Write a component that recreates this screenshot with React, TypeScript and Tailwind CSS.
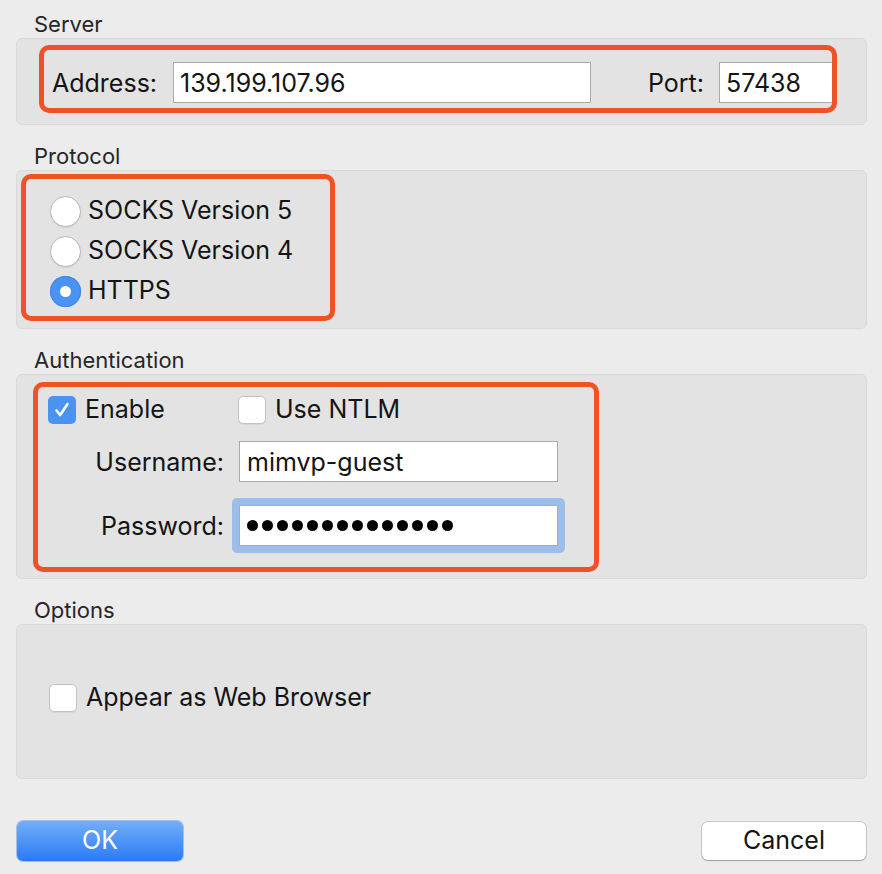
import React from 'react';

const FONT = { fontFamily: 'Inter, "Open Sans", "Liberation Sans", sans-serif' };

const SectionTitle = ({ children }: { children: React.ReactNode }) => (
  <div className="h-[28px] pl-[18px] text-[22px] leading-[28px] text-[#262626]">{children}</div>
);

const Radio = ({ checked }: { checked?: boolean }) =>
  checked ? (
    <div className="w-[31px] h-[31px] rounded-full bg-[#4a93f1] flex items-center justify-center shadow-[inset_0_0_0_1px_#3f86e6]">
      <div className="w-[11px] h-[11px] rounded-full bg-white" />
    </div>
  ) : (
    <div className="w-[31px] h-[31px] rounded-full bg-white border border-[#b9b9b9] shadow-[0_1px_1px_rgba(0,0,0,0.08)]" />
  );

const Checkbox = ({ checked }: { checked?: boolean }) =>
  checked ? (
    <div className="w-[28px] h-[28px] rounded-[5px] bg-[#4a93f1] flex items-center justify-center">
      <svg width="18" height="18" viewBox="0 0 18 18" fill="none">
        <path d="M3.5 9.5 L7.2 14 L14.5 3" stroke="white" strokeWidth="2.6" strokeLinecap="round" strokeLinejoin="round" />
      </svg>
    </div>
  ) : (
    <div className="w-[28px] h-[28px] rounded-[5px] bg-white border border-[#c2c2c2] shadow-[0_1px_1px_rgba(0,0,0,0.06)]" />
  );

export default function App() {
  return (
    <div className="w-[882px] h-[874px] bg-[#ececec] flex flex-col pl-[16px] pr-[15px] pt-[10px] text-[#141414]" style={FONT}>
      {/* Server */}
      <SectionTitle>Server</SectionTitle>
      <div className="h-[87px] bg-[#e3e3e3] border border-[#d9d9d9] rounded-[6px] pt-[6px] pl-[22px]">
        <div className="w-[798px] h-[68px] border-[5px] border-[#ef5226] rounded-[10px] flex items-start pt-[12px]">
          <div className="w-[129px] h-[41px] pl-[8px] pt-[3px] flex items-center text-[25px]">Address:</div>
          <div className="w-[418px] h-[41px] bg-white border border-[#ababab] flex items-center px-[6px] pt-[3px] text-[25px]">139.199.107.96</div>
          <div className="flex-1 h-[41px] flex items-center justify-end pr-[15px] pt-[3px] text-[25px]">Port:</div>
          <div className="w-[113px] h-[41px] bg-white border border-r-0 border-[#ababab] flex items-center px-[6px] pt-[3px] text-[25px]">57438</div>
        </div>
      </div>

      {/* Protocol */}
      <div className="mt-[17px]">
        <SectionTitle>Protocol</SectionTitle>
      </div>
      <div className="h-[159px] bg-[#e3e3e3] border border-[#d9d9d9] rounded-[6px] pt-[3px] pl-[4px]">
        <div className="w-[314px] h-[147px] border-[5px] border-[#ef5226] rounded-[10px] pt-[12px] pl-[24px] flex flex-col">
          {[
            { label: 'SOCKS Version 5', checked: false },
            { label: 'SOCKS Version 4', checked: false },
            { label: 'HTTPS', checked: true },
          ].map((r) => (
            <div key={r.label} className="h-[40px] flex items-center gap-[7px] text-[25px]">
              <Radio checked={r.checked} />
              <span>{r.label}</span>
            </div>
          ))}
        </div>
      </div>

      {/* Authentication */}
      <div className="mt-[17px]">
        <SectionTitle>Authentication</SectionTitle>
      </div>
      <div className="h-[205px] bg-[#e3e3e3] border border-[#d9d9d9] rounded-[6px] pt-[7px] pl-[16px]">
        <div className="w-[566px] h-[190px] border-[5px] border-[#ef5226] rounded-[10px] pt-[9px] flex flex-col">
          <div className="flex items-center h-[28px] pl-[10px] text-[25px]">
            <div className="w-[190px] flex items-center gap-[9px]">
              <Checkbox checked />
              <span>Enable</span>
            </div>
            <div className="flex items-center gap-[9px]">
              <Checkbox />
              <span>Use NTLM</span>
            </div>
          </div>
          <div className="flex items-center mt-[17px] text-[25px]">
            <div className="w-[186px] text-right pt-[2px]">Username:</div>
            <div className="ml-[15px] w-[319px] h-[41px] bg-white border border-[#ababab] flex items-center px-[7px] pt-[2px]">mimvp-guest</div>
          </div>
          <div className="flex items-center mt-[16px] text-[25px]">
            <div className="w-[186px] text-right pt-[2px]">Password:</div>
            <div className="ml-[8px] p-[7px] rounded-[5px] bg-[#9bbfea]">
              <div className="w-[319px] h-[41px] bg-white border border-[#ababab] flex items-center px-[7px] gap-[4px]">
                {Array.from({ length: 14 }).map((_, i) => (
                  <span key={i} className="w-[11px] h-[11px] rounded-full bg-black" />
                ))}
              </div>
            </div>
          </div>
        </div>
      </div>

      {/* Options */}
      <div className="mt-[17px]">
        <SectionTitle>Options</SectionTitle>
      </div>
      <div className="h-[155px] bg-[#e3e3e3] border border-[#d9d9d9] rounded-[6px] pt-[54px] pl-[32px]">
        <div className="flex items-center gap-[9px] text-[25px]">
          <Checkbox />
          <span>Appear as Web Browser</span>
        </div>
      </div>

      {/* Buttons */}
      <div className="mt-[42px] flex items-start justify-between pl-[1px] pr-[1px]">
        <button className="w-[166px] h-[40px] rounded-[6px] bg-gradient-to-b from-[#72aef7] to-[#2a79f5] text-white text-[25px] shadow-[0_0_0_1px_rgba(40,110,230,0.35)]">
          OK
        </button>
        <button className="w-[164px] h-[38px] mt-[1px] rounded-[6px] bg-white text-[25px] text-[#141414] shadow-[0_0_0_1px_rgba(0,0,0,0.15),0_1px_1px_rgba(0,0,0,0.2)]">
          Cancel
        </button>
      </div>
    </div>
  );
}
